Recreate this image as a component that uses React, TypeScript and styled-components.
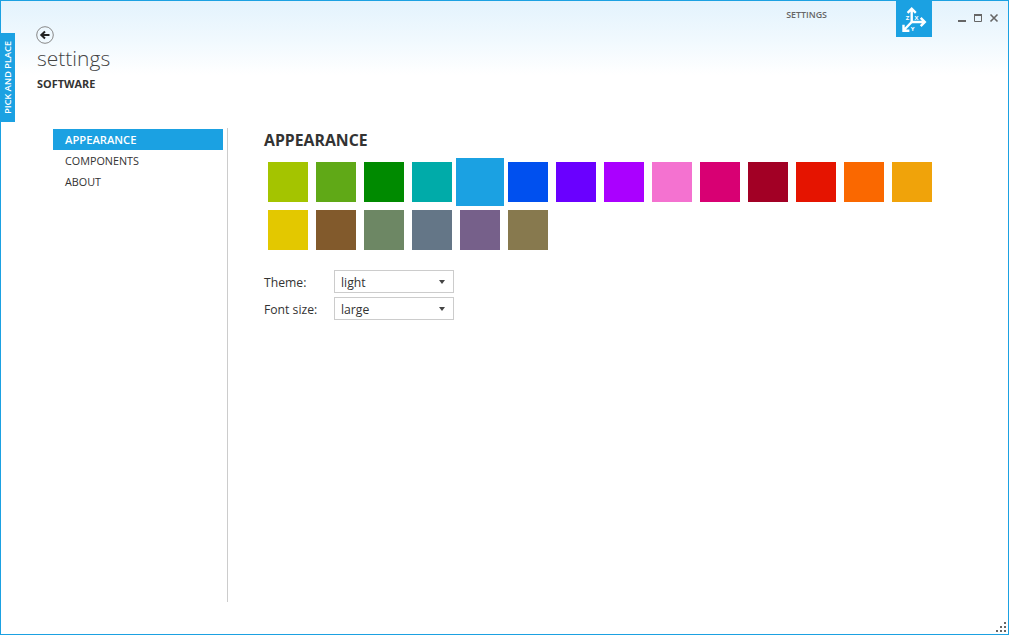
import { useState } from "react";
import styled, { createGlobalStyle } from "styled-components";

const GlobalStyle = createGlobalStyle`
  html, body {
    margin: 0;
    padding: 0;
    height: 100%;
    overflow: hidden;
    background: #fff;
  }
  #root {
    height: 100%;
  }
  * {
    box-sizing: border-box;
  }
`;

const Window = styled.div`
  position: relative;
  width: 1009px;
  height: 635px;
  border: 1px solid #1ba1e2;
  background: linear-gradient(to bottom, #e3f3fd 0, #f1f9fe 40px, #ffffff 74px);
  font-family: "Open Sans", "Noto Sans", sans-serif;
  color: #333;
  display: flex;
  flex-direction: column;
`;

const SideTab = styled.div`
  position: absolute;
  left: 0;
  top: 32px;
  width: 14px;
  height: 89px;
  padding-left: 2px;
  background: #1ba1e2;
  color: #fff;
  font-size: 9.6px;
  font-weight: 600;
  writing-mode: vertical-rl;
  transform: rotate(180deg);
  display: flex;
  align-items: center;
  justify-content: center;
  white-space: nowrap;
  letter-spacing: -0.2px;
`;

const Header = styled.header`
  display: flex;
  justify-content: space-between;
  align-items: flex-start;
  height: 127px;
  flex: none;
`;

const Heading = styled.div`
  padding: 25px 0 0 35px;
`;

const BackButton = styled.button`
  display: block;
  width: 18px;
  height: 18px;
  padding: 0;
  border: 0;
  background: none;
  cursor: pointer;
`;

const PageTitle = styled.h1`
  margin: 0 0 0 1px;
  font-size: 21px;
  line-height: 28px;
  font-weight: 300;
  color: #444;
`;

const SubTitle = styled.div`
  margin: 4px 0 0 1px;
  font-size: 10.9px;
  line-height: 16px;
  font-weight: 700;
  color: #333;
`;

const Chrome = styled.div`
  display: flex;
  align-items: flex-start;
`;

const WindowTitle = styled.div`
  margin: 7px 69px 0 0;
  font-size: 8.9px;
  line-height: 13px;
  font-weight: 600;
  color: #666;
`;

const Logo = styled.div`
  width: 36px;
  height: 36px;
  background: #1ba1e2;
`;

const Controls = styled.div`
  display: flex;
  gap: 6px;
  margin: 10px 9px 0 25px;
`;

const ControlButton = styled.button`
  display: block;
  width: 10px;
  height: 10px;
  padding: 0;
  border: 0;
  background: none;
`;

const Body = styled.main`
  display: flex;
  flex: 1;
  align-items: flex-start;
  padding-left: 52px;
`;

const Nav = styled.nav`
  width: 175px;
  height: 474px;
  padding: 1px 4px 0 0;
  border-right: 1px solid #ccc;
`;

const NavItem = styled.div<{ $active?: boolean }>`
  height: 21px;
  padding-left: 12px;
  font-size: ${(props) => (props.$active ? "11.2px" : "10.8px")};
  line-height: 21px;
  font-weight: ${(props) => (props.$active ? 600 : 400)};
  color: ${(props) => (props.$active ? "#fff" : "#333")};
  background: ${(props) => (props.$active ? "#1ba1e2" : "transparent")};
`;

const Content = styled.section`
  padding-left: 36px;
`;

const SectionTitle = styled.h2`
  margin: 0;
  height: 30px;
  font-size: 15.8px;
  line-height: 24px;
  font-weight: 700;
  color: #333;
`;

const Swatches = styled.div`
  display: grid;
  grid-template-columns: repeat(14, 48px);
  grid-auto-rows: 48px;
  width: 672px;
`;

const Swatch = styled.div<{ $color: string; $selected?: boolean }>`
  margin: ${(props) => (props.$selected ? "0" : "4px")};
  background: ${(props) => props.$color};
`;

const Fields = styled.div`
  margin-top: 16px;
  display: flex;
  flex-direction: column;
  gap: 4px;
`;

const Field = styled.label`
  display: flex;
  align-items: center;
  height: 23px;
  font-size: 12.2px;
  color: #333;
`;

const FieldLabel = styled.span`
  width: 70px;
  padding-top: 2px;
`;

const SelectBox = styled.div`
  display: flex;
  align-items: center;
  justify-content: space-between;
  width: 120px;
  height: 23px;
  padding: 0 8px 0 6px;
  border: 1px solid #ccc;
  background: #fff;
`;

const SelectValue = styled.span`
  padding-top: 2px;
`;

const Caret = styled.span`
  width: 0;
  height: 0;
  border-left: 3.5px solid transparent;
  border-right: 3.5px solid transparent;
  border-top: 4px solid #444;
`;

const Grip = styled.svg`
  position: absolute;
  right: 0;
  bottom: 0;
`;

const row1 = [
  "#a4c400", "#60a917", "#008a00", "#00aba9", "#1ba1e2", "#0050ef", "#6a00ff",
  "#aa00ff", "#f472d0", "#d80073", "#a20025", "#e51400", "#fa6800", "#f0a30a",
];
const row2 = ["#e3c800", "#825a2c", "#6d8764", "#647687", "#76608a", "#87794e"];

function AxesLogo() {
  return (
    <svg width="36" height="36" viewBox="0 0 36 36">
      <g fill="none" stroke="#fff" strokeWidth="2.4">
        <path d="M15.7 21V8M11.6 11.8l4.1-4.1 4.1 4.1" />
        <path d="M15.7 21H28.5M24.7 16.9l4.1 4.1-4.1 4.1" />
        <path d="M15.7 21L7.5 29.5M7.5 23.8v5.9h5.9" />
      </g>
      <g fill="#fff" fontSize="6" fontWeight="700" fontFamily="Open Sans, sans-serif" textAnchor="middle">
        <text x="11.5" y="19">Z</text>
        <text x="20.5" y="19">X</text>
        <text x="16.5" y="30">Y</text>
      </g>
    </svg>
  );
}

function BackIcon() {
  return (
    <svg width="18" height="18" viewBox="0 0 18 18">
      <circle cx="9" cy="9" r="8.3" fill="none" stroke="#888" strokeWidth="1" />
      <path d="M13.5 9H5.5M9 5.5L5.3 9 9 12.5" fill="none" stroke="#222" strokeWidth="2" />
    </svg>
  );
}

export default function App() {
  const [active] = useState("APPEARANCE");

  return (
    <Window>
      <GlobalStyle />
      <SideTab>PICK AND PLACE</SideTab>
      <Header>
        <Heading>
          <BackButton aria-label="back">
            <BackIcon />
          </BackButton>
          <PageTitle>settings</PageTitle>
          <SubTitle>SOFTWARE</SubTitle>
        </Heading>
        <Chrome>
          <WindowTitle>SETTINGS</WindowTitle>
          <Logo>
            <AxesLogo />
          </Logo>
          <Controls>
            <ControlButton aria-label="minimize">
              <svg width="10" height="10" viewBox="0 0 10 10">
                <rect x="1" y="7" width="8" height="2" fill="#666" />
              </svg>
            </ControlButton>
            <ControlButton aria-label="maximize">
              <svg width="10" height="10" viewBox="0 0 10 10">
                <path d="M1.5 2.5h7v6h-7z" fill="none" stroke="#666" />
                <rect x="1" y="1" width="8" height="2" fill="#666" />
              </svg>
            </ControlButton>
            <ControlButton aria-label="close">
              <svg width="10" height="10" viewBox="0 0 10 10">
                <path d="M1.5 1.5l7 7M8.5 1.5l-7 7" stroke="#666" strokeWidth="1.6" />
              </svg>
            </ControlButton>
          </Controls>
        </Chrome>
      </Header>
      <Body>
        <Nav>
          {["APPEARANCE", "COMPONENTS", "ABOUT"].map((item) => (
            <NavItem key={item} $active={item === active}>
              {item}
            </NavItem>
          ))}
        </Nav>
        <Content>
          <SectionTitle>APPEARANCE</SectionTitle>
          <Swatches>
            {row1.concat(row2).map((color) => (
              <Swatch key={color} $color={color} $selected={color === "#1ba1e2"} />
            ))}
          </Swatches>
          <Fields>
            <Field>
              <FieldLabel>Theme:</FieldLabel>
              <SelectBox>
                <SelectValue>light</SelectValue>
                <Caret />
              </SelectBox>
            </Field>
            <Field>
              <FieldLabel>Font size:</FieldLabel>
              <SelectBox>
                <SelectValue>large</SelectValue>
                <Caret />
              </SelectBox>
            </Field>
          </Fields>
        </Content>
      </Body>
      <Grip width="12" height="12" viewBox="0 0 12 12" fill="#666">
        <rect x="8" y="0" width="2" height="2" />
        <rect x="4" y="4" width="2" height="2" />
        <rect x="8" y="4" width="2" height="2" />
        <rect x="0" y="8" width="2" height="2" />
        <rect x="4" y="8" width="2" height="2" />
        <rect x="8" y="8" width="2" height="2" />
      </Grip>
    </Window>
  );
}
